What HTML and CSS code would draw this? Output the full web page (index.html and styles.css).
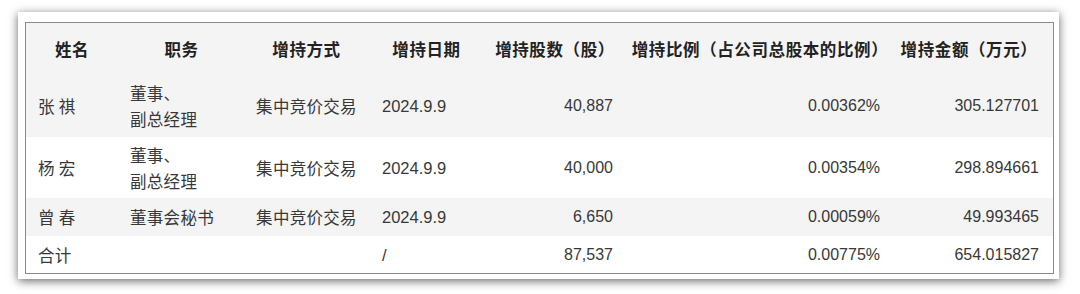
FILE: index.html
```html
<!DOCTYPE html>
<html lang="zh">
<head>
<meta charset="utf-8">
<link rel="stylesheet" href="styles.css">
</head>
<body>
<div class="page">
  <div class="panel">
    <div class="frame">
      <table class="grid">
        <colgroup>
          <col class="c1"><col class="c2"><col class="c3"><col class="c4"><col class="c5"><col class="c6"><col class="c7">
        </colgroup>
        <thead>
          <tr class="head">
            <th>姓名</th><th>职务</th><th>增持方式</th><th>增持日期</th><th>增持股数（股）</th><th>增持比例（占公司总股本的比例）</th><th class="h7">增持金额（万元）</th>
          </tr>
        </thead>
        <tbody>
          <tr class="r1 shade">
            <td class="name">张 祺</td><td class="role">董事、<br>副总经理</td><td class="way">集中竞价交易</td><td class="date">2024.9.9</td><td class="num n5">40,887</td><td class="num n6">0.00362%</td><td class="num n7">305.127701</td>
          </tr>
          <tr class="r2">
            <td class="name">杨 宏</td><td class="role">董事、<br>副总经理</td><td class="way">集中竞价交易</td><td class="date">2024.9.9</td><td class="num n5">40,000</td><td class="num n6">0.00354%</td><td class="num n7">298.894661</td>
          </tr>
          <tr class="r3 shade">
            <td class="name">曾 春</td><td class="role">董事会秘书</td><td class="way">集中竞价交易</td><td class="date">2024.9.9</td><td class="num n5">6,650</td><td class="num n6">0.00059%</td><td class="num n7">49.993465</td>
          </tr>
          <tr class="r4">
            <td class="name">合计</td><td class="role"></td><td class="way"></td><td class="date">/</td><td class="num n5">87,537</td><td class="num n6">0.00775%</td><td class="num n7">654.015827</td>
          </tr>
        </tbody>
      </table>
    </div>
  </div>
</div>
</body>
</html>
```
FILE: styles.css
```css
* { box-sizing: border-box; }
html, body {
  margin: 0;
  padding: 0;
  background: #ffffff;
}
body {
  font-family: "Liberation Sans", "Noto Sans CJK SC", sans-serif;
  color: #333333;
}
.page {
  width: 1080px;
  height: 294px;
  padding: 12px 21px 0 18px;
}
.panel {
  width: 1041px;
  height: 267px;
  background: #ffffff;
  padding: 10px 6px 6px 7px;
  box-shadow: 0 2px 9px rgba(0, 0, 0, 0.6);
}
.frame {
  width: 1029px;
  height: 252px;
  border: 1px solid #8a8a8a;
  background: #ffffff;
}
.grid {
  width: 1027px;
  table-layout: fixed;
  border-collapse: collapse;
  border-spacing: 0;
}
.c1 { width: 92px; }
.c2 { width: 127px; }
.c3 { width: 123px; }
.c4 { width: 117px; }
.c5 { width: 140px; }
.c6 { width: 270px; }
.c7 { width: 158px; }

.head {
  height: 51px;
  background: #f4f4f4;
}
.head th {
  font-family: "Noto Sans CJK SC", sans-serif;
  font-size: 16.5px;
  letter-spacing: 0.6px;
  font-weight: 700;
  color: #222222;
  text-align: center;
  vertical-align: middle;
  padding: 0 4px;
  white-space: nowrap;
}
.head .h7 { padding-right: 14px; }

td {
  font-size: 16px;
  line-height: 26px;
  vertical-align: middle;
  padding: 0 13px;
  white-space: nowrap;
  color: #383838;
}
.r1 { height: 63px; }
.r2 { height: 61px; }
.r3 { height: 38px; }
.r4 { height: 37px; }
.shade { background: #f4f4f4; }

.name, .role, .way {
  font-family: "Noto Sans CJK SC", sans-serif;
  font-size: 16.5px;
  letter-spacing: 0.3px;
}
.name { text-align: left; padding-left: 12px; }
.role { text-align: left; padding-left: 12px; }
.way { text-align: center; padding: 0; }
.date { text-align: left; padding-left: 14px; font-size: 16.5px; }
.num { text-align: right; }
.n5 { padding-right: 12px; }
.n6 { padding-right: 15px; }
.n7 { padding-right: 14px; }
```
